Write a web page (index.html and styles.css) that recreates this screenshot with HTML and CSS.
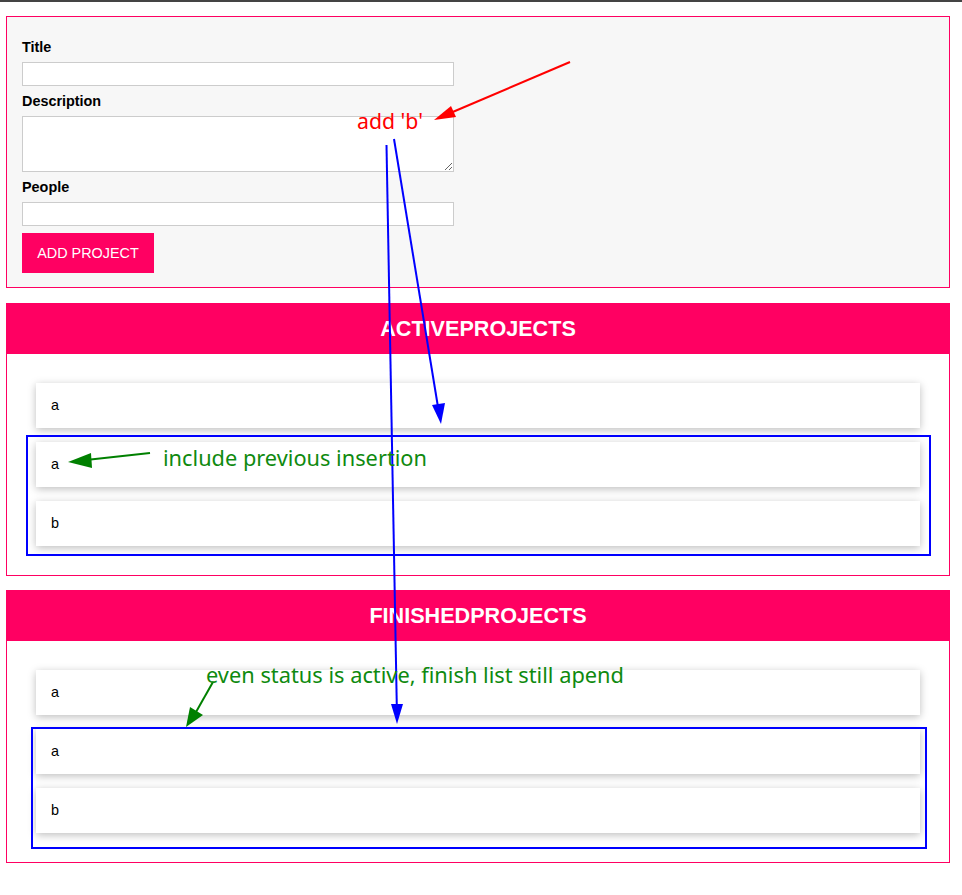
FILE: index.html
```html
<!DOCTYPE html>
<html lang="en">
<head>
<meta charset="utf-8">
<title>Projects</title>
<link rel="stylesheet" href="styles.css">
</head>
<body>
<div class="topline"></div>
<div class="page">
  <form class="card form-card">
    <label class="lbl" for="title">Title</label>
    <input class="field" id="title" type="text">
    <label class="lbl" for="desc">Description</label>
    <textarea class="field area" id="desc"></textarea>
    <label class="lbl" for="people">People</label>
    <input class="field last" id="people" type="number">
    <button class="btn" type="button">ADD PROJECT</button>
  </form>

  <section class="projects">
    <header class="proj-head"><h2>ACTIVEPROJECTS</h2></header>
    <ul class="proj-list">
      <li class="proj-item">a</li>
      <li class="proj-item">a</li>
      <li class="proj-item">b</li>
    </ul>
  </section>

  <section class="projects finished">
    <header class="proj-head"><h2>FINISHEDPROJECTS</h2></header>
    <ul class="proj-list">
      <li class="proj-item">a</li>
      <li class="proj-item">a</li>
      <li class="proj-item">b</li>
    </ul>
  </section>
</div>

<svg class="notes" width="962" height="895" viewBox="0 0 962 895" xmlns="http://www.w3.org/2000/svg">
  <!-- red annotation -->
  <line x1="570" y1="62" x2="448" y2="114" class="red-s"/>
  <polygon points="434,120 451,106 456,117" class="red-f"/>
  <text x="357" y="129" class="note red-t" textLength="66" lengthAdjust="spacingAndGlyphs">add 'b'</text>

  <!-- blue arrows -->
  <line x1="386.5" y1="145" x2="396.8" y2="706" class="blue-s"/>
  <polygon points="397,724 391,704 403,704" class="blue-f"/>
  <line x1="394" y1="139" x2="438" y2="407" class="blue-s"/>
  <polygon points="441,424 432,405 445,403" class="blue-f"/>

  <!-- blue boxes -->
  <rect x="27" y="436" width="903" height="119" class="blue-box"/>
  <rect x="32" y="728" width="894" height="120" class="blue-box"/>

  <!-- green annotations -->
  <line x1="150" y1="453" x2="86" y2="460" class="green-s"/>
  <polygon points="68,462 91,453 92,468" class="green-f"/>
  <text x="163" y="466" class="note green-t" textLength="264" lengthAdjust="spacingAndGlyphs">include previous insertion</text>

  <line x1="213" y1="682" x2="196" y2="712" class="green-s"/>
  <polygon points="186,727 190,707 203,715" class="green-f"/>
  <text x="206" y="683" class="note green-t" textLength="418" lengthAdjust="spacingAndGlyphs">even status is active, finish list still apend</text>
</svg>
</body>
</html>
```

FILE: styles.css
```css
html, body {
  margin: 0;
  padding: 0;
  background: #ffffff;
}

body {
  font-family: "Liberation Sans", Arial, sans-serif;
  color: #000;
  position: relative;
  min-height: 895px;
}

.topline {
  height: 2px;
  background: #444444;
}

.page {
  padding: 14px 12px 0 6px;
}

.card {
  margin: 0;
}

.form-card {
  display: block;
  background: #f7f7f7;
  border: 1px solid #ff0062;
  padding: 21px 15px 14px;
}

.lbl {
  display: block;
  font-size: 14.4px;
  font-weight: bold;
  line-height: 19px;
  margin: 0 0 5px;
}

.field {
  display: block;
  box-sizing: border-box;
  width: 432px;
  height: 24px;
  margin: 0 0 6px;
  padding: 0 4px;
  border: 1px solid #cccccc;
  background: #ffffff;
  font: inherit;
  outline: none;
}

.area {
  height: 56px;
}

.field.last {
  margin-bottom: 7px;
}

.btn {
  display: block;
  height: 40px;
  width: 132px;
  padding: 0;
  margin: 0;
  border: none;
  background: #ff0062;
  color: #ffffff;
  font-family: "Liberation Sans", Arial, sans-serif;
  font-size: 14.4px;
}

.projects {
  margin-top: 15px;
  border: 1px solid #ff0062;
  background: #ffffff;
}

.projects.finished {
  margin-top: 14px;
}

.proj-head {
  background: #ff0062;
  height: 50px;
}

.proj-head h2 {
  margin: 0;
  color: #ffffff;
  font-size: 21.6px;
  font-weight: bold;
  line-height: 50px;
  text-align: center;
}

.proj-list {
  list-style: none;
  margin: 0;
  padding: 29px;
}

.proj-item {
  display: flex;
  align-items: center;
  height: 45px;
  padding: 0 15px 1px;
  box-sizing: border-box;
  margin-bottom: 14px;
  background: #ffffff;
  box-shadow: 0 2px 8px rgba(0, 0, 0, 0.26);
  font-size: 14.4px;
}

.proj-item:last-child {
  margin-bottom: 0;
}

.notes {
  position: absolute;
  top: 0;
  left: 0;
  pointer-events: none;
}

.note {
  font-family: "Noto Sans", "Open Sans", sans-serif;
  font-size: 22px;
}

.red-s { stroke: #ff0000; stroke-width: 2; }
.red-f { fill: #ff0000; }
.red-t { fill: #ff0000; }

.blue-s { stroke: #0000ff; stroke-width: 2; }
.blue-f { fill: #0000ff; }
.blue-box { fill: none; stroke: #0000ff; stroke-width: 2; }

.green-s { stroke: #008000; stroke-width: 2; }
.green-f { fill: #008000; }
.green-t { fill: #0f8a0f; }
```
